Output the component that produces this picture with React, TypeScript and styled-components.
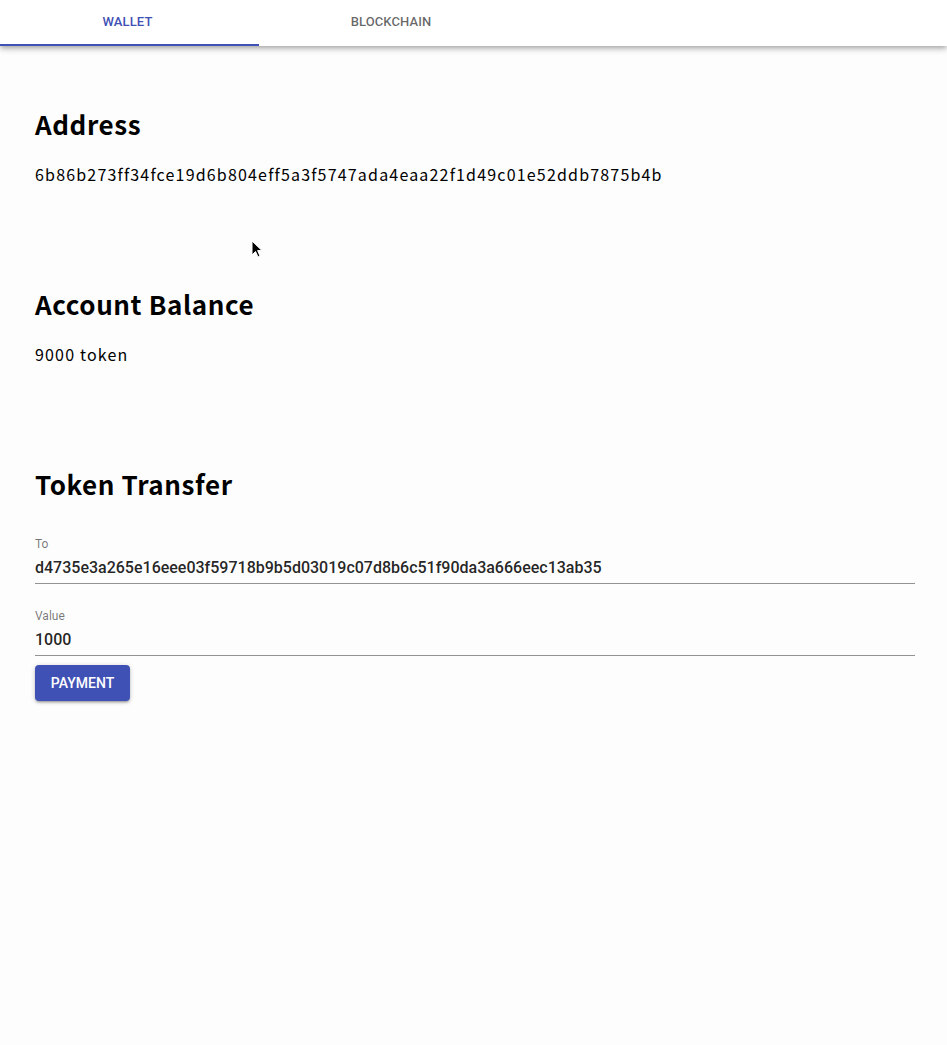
import React from "react";
import styled, { createGlobalStyle } from "styled-components";

const GlobalStyle = createGlobalStyle`
  html, body {
    margin: 0;
    padding: 0;
    background: #fdfdfd;
  }
  body {
    font-family: "Noto Sans CJK JP", "Noto Sans", sans-serif;
    color: #000;
  }
`;

const Page = styled.div`
  position: relative;
  min-height: 1045px;
`;

const TabBar = styled.header`
  display: flex;
  height: 46px;
  background: #fff;
  box-shadow: 0 2px 4px -1px rgba(0, 0, 0, 0.2), 0 4px 5px 0 rgba(0, 0, 0, 0.14),
    0 1px 10px 0 rgba(0, 0, 0, 0.08);
`;

const Tab = styled.button<{ $active?: boolean }>`
  width: 259px;
  height: 46px;
  border: 0;
  background: transparent;
  padding: 0 ${(p) => (p.$active ? 4 : 0)}px 1px ${(p) => (p.$active ? 0 : 5)}px;
  font-family: Roboto, "Liberation Sans", sans-serif;
  font-weight: 500;
  font-size: 13px;
  letter-spacing: 0.1px;
  text-transform: uppercase;
  color: ${(p) => (p.$active ? "#3f51b5" : "rgba(0,0,0,0.6)")};
  border-bottom: 2px solid ${(p) => (p.$active ? "#3f51b5" : "transparent")};
  display: flex;
  align-items: center;
  justify-content: center;
  box-sizing: border-box;
`;

const Content = styled.main`
  padding: 60px 32px 0 35px;
`;

const Section = styled.section<{ $gap?: number }>`
  margin-bottom: ${(p) => p.$gap ?? 0}px;
`;

const Heading = styled.h2`
  margin: 0;
  font-family: "Noto Sans CJK JP", sans-serif;
  font-size: 26px;
  font-weight: 600;
  line-height: 36px;
  letter-spacing: 0.6px;
`;

const BodyText = styled.p`
  margin: 20px 0 0;
  font-family: "Noto Sans CJK JP", sans-serif;
  font-size: 16px;
  line-height: 24px;
  letter-spacing: 1.18px;
`;

const Field = styled.label<{ $top?: number }>`
  display: flex;
  flex-direction: column;
  margin-top: ${(p) => p.$top ?? 0}px;
  border-bottom: 1px solid rgba(0, 0, 0, 0.42);
  padding-bottom: 5px;
`;

const FieldLabel = styled.span`
  font-family: Roboto, "Liberation Sans", sans-serif;
  font-size: 12px;
  line-height: 16px;
  color: rgba(0, 0, 0, 0.54);
`;

const FieldInput = styled.input`
  border: 0;
  outline: none;
  background: transparent;
  padding: 0;
  margin-top: 6px;
  font-family: Roboto, "Liberation Sans", sans-serif;
  font-size: 16px;
  font-weight: 500;
  line-height: 20px;
  height: 20px;
  color: rgba(0, 0, 0, 0.87);
`;

const Form = styled.div`
  display: flex;
  flex-direction: column;
  margin-top: 34px;
`;

const Button = styled.button`
  align-self: flex-start;
  margin-top: 9px;
  width: 95px;
  height: 36px;
  border: 0;
  border-radius: 4px;
  background: #3f51b5;
  color: #fff;
  font-family: Roboto, "Liberation Sans", sans-serif;
  font-weight: 500;
  font-size: 14px;
  text-transform: uppercase;
  box-shadow: 0 1px 5px 0 rgba(0, 0, 0, 0.2), 0 2px 2px 0 rgba(0, 0, 0, 0.14),
    0 3px 1px -2px rgba(0, 0, 0, 0.12);
`;

const Cursor = styled.svg`
  position: absolute;
  left: 251px;
  top: 240px;
`;

export default function App() {
  return (
    <Page>
      <GlobalStyle />
      <TabBar>
        <Tab $active>Wallet</Tab>
        <Tab>Blockchain</Tab>
      </TabBar>
      <Content>
        <Section $gap={100}>
          <Heading>Address</Heading>
          <BodyText>6b86b273ff34fce19d6b804eff5a3f5747ada4eaa22f1d49c01e52ddb7875b4b</BodyText>
        </Section>
        <Section $gap={100}>
          <Heading>Account Balance</Heading>
          <BodyText>9000 token</BodyText>
        </Section>
        <Section>
          <Heading>Token Transfer</Heading>
          <Form>
            <Field>
              <FieldLabel>To</FieldLabel>
              <FieldInput defaultValue="d4735e3a265e16eee03f59718b9b5d03019c07d8b6c51f90da3a666eec13ab35" />
            </Field>
            <Field $top={24}>
              <FieldLabel>Value</FieldLabel>
              <FieldInput defaultValue="1000" />
            </Field>
            <Button>Payment</Button>
          </Form>
        </Section>
      </Content>
      <Cursor width="12" height="19" viewBox="0 0 12 19">
        <path d="M1 1 L1 15 L4.5 11.5 L7 17 L9 16 L6.6 10.6 L11 10.6 Z" fill="#000" stroke="#fff" strokeWidth="1" />
      </Cursor>
    </Page>
  );
}
